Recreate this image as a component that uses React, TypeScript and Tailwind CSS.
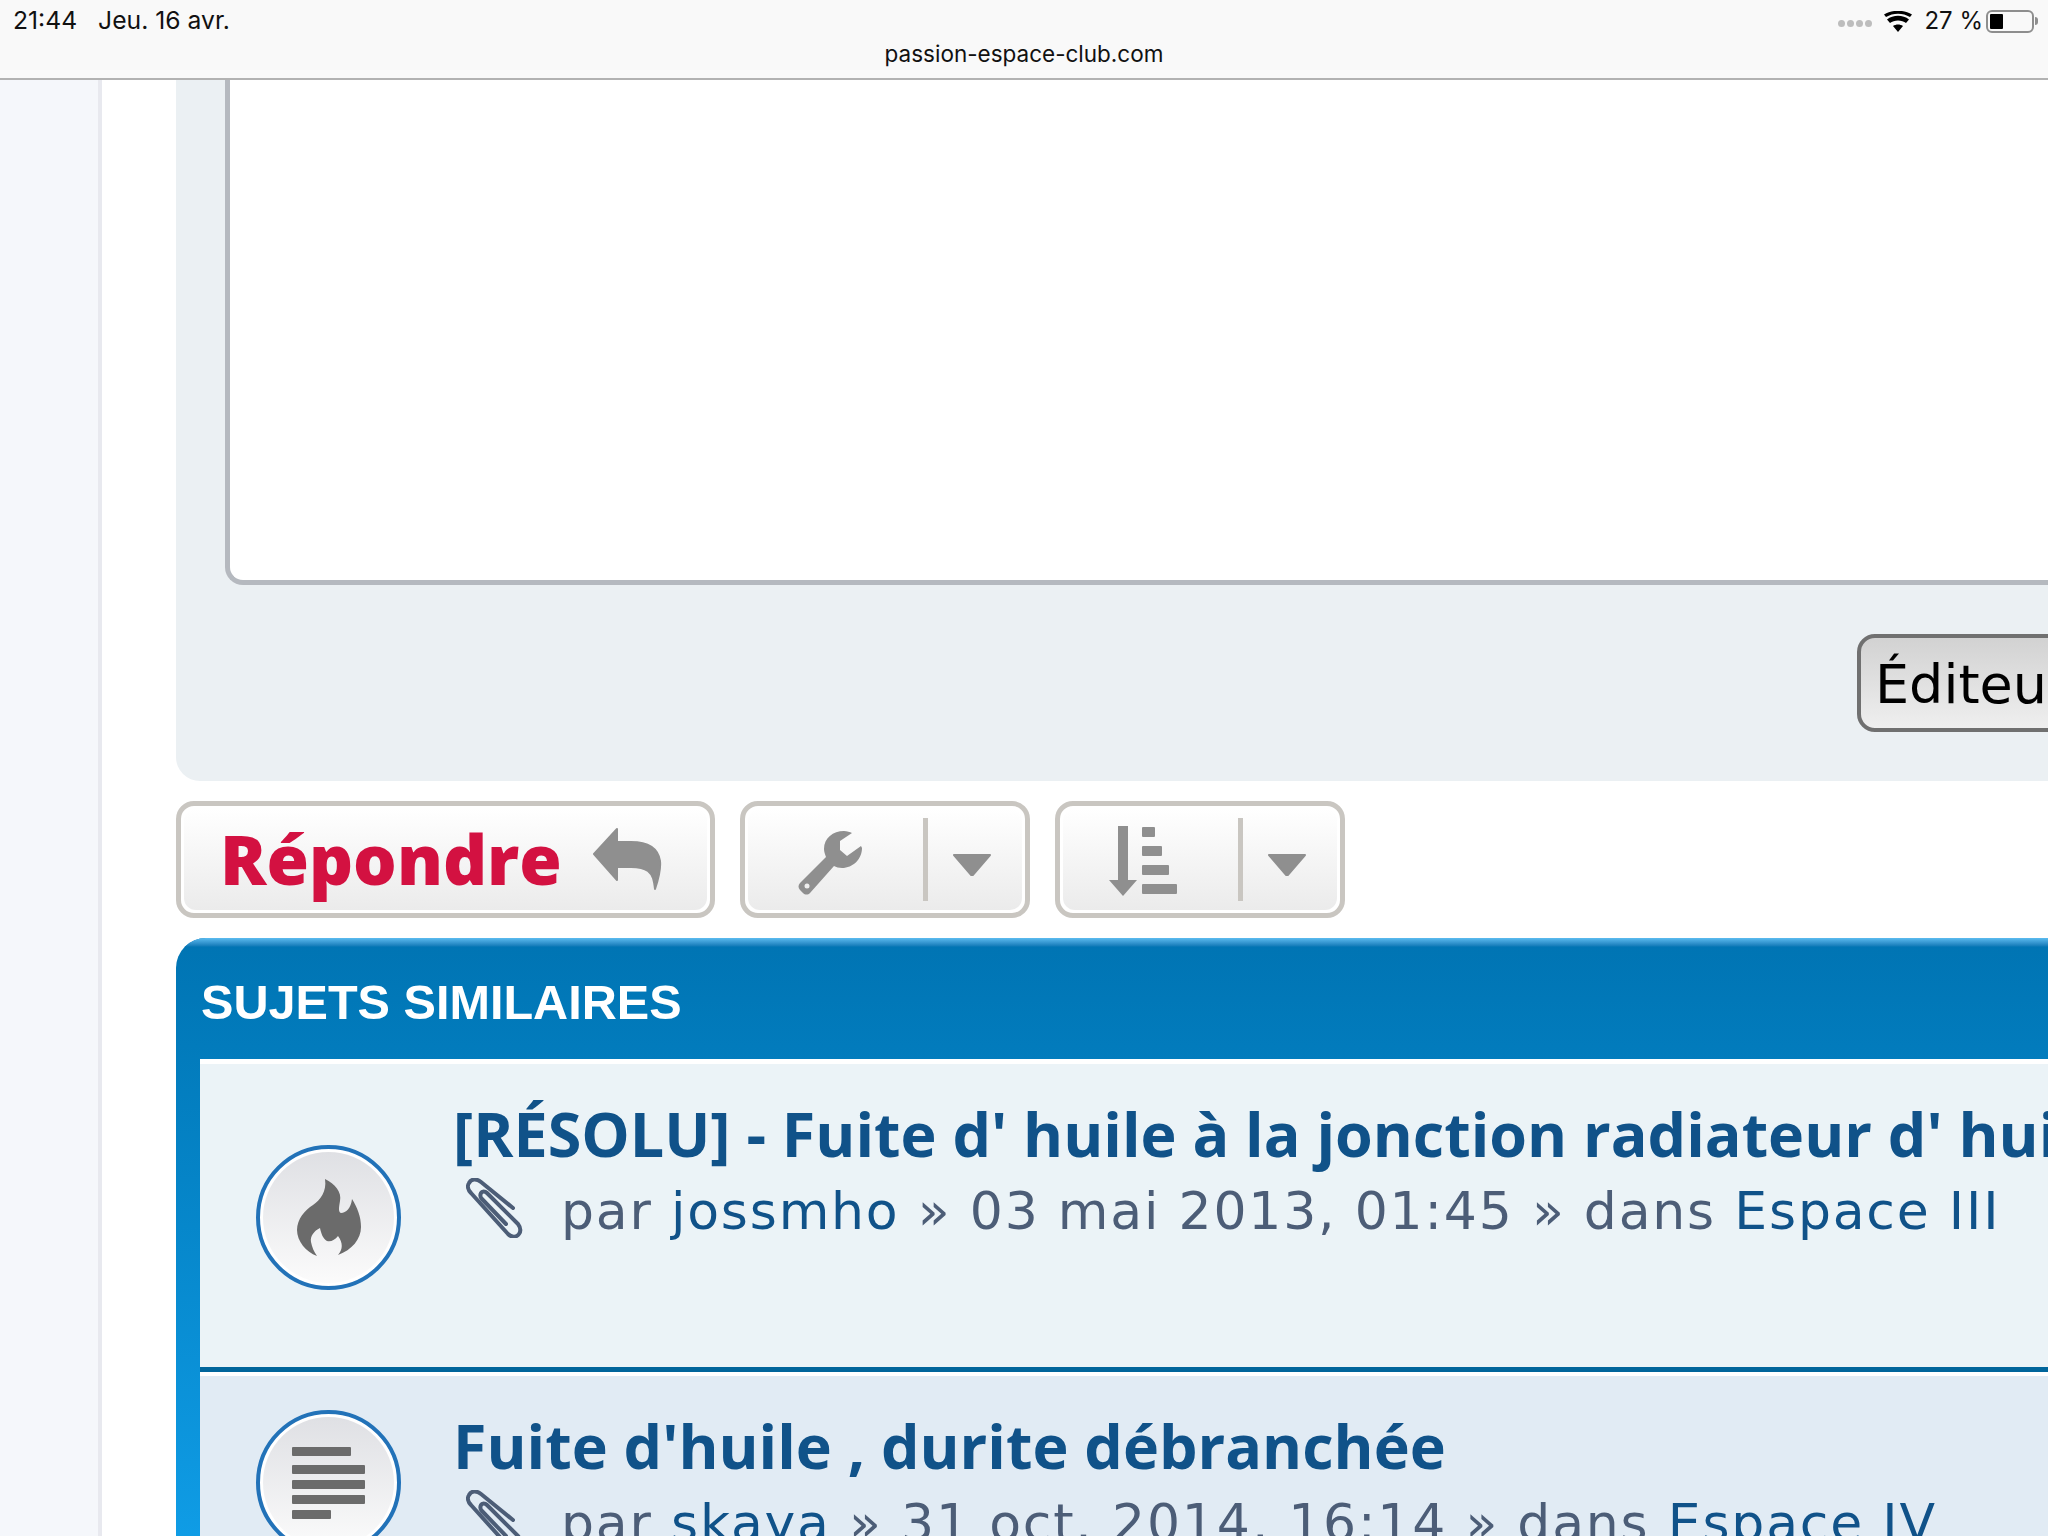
import React from 'react';

const ArrowDown = () => (
  <svg width="40" height="24" viewBox="0 0 40 24"><path d="M2 3h36l-18 21z" fill="#8f8f8f" stroke="#8f8f8f" strokeWidth="2" strokeLinejoin="round" /></svg>
);

const ReplyIcon = () => (
  <svg width="70" height="64" viewBox="0 0 70 64">
    <path d="M25 2v13h14c18 0 27 6 29 19 1 9-2 19-5 28-1-9-2-14-7-18-4-3-9-4-17-4H25v13L2 27z" fill="#8f8f8f" stroke="#8f8f8f" strokeWidth="2" strokeLinejoin="round" />
  </svg>
);

const WrenchIcon = () => (
  <svg width="66" height="66" viewBox="0 0 66 66">
    <path d="M64 18c0 11-9 20-20 20-3 0-6-1-8-2L12 63c-2 2-5 2-7 0l-3-3c-2-2-2-5 0-7l26-26c-1-3-2-5-2-8C26 8 35 1 46 1c3 0 6 1 8 2L42 11v9l7 6 14-10z" fill="#8f8f8f" />
    <circle cx="9" cy="56" r="2.5" fill="#efefef" />
  </svg>
);

const SortIcon = () => (
  <svg width="68" height="70" viewBox="0 0 68 70">
    <rect x="9" y="0" width="10" height="56" fill="#8f8f8f" />
    <path d="M0 54h28L14 70z" fill="#8f8f8f" />
    <rect x="33" y="1" width="13" height="10" rx="1" fill="#8f8f8f" />
    <rect x="33" y="20" width="20" height="10" rx="1" fill="#8f8f8f" />
    <rect x="33" y="39" width="27" height="10" rx="1" fill="#8f8f8f" />
    <rect x="33" y="58" width="35" height="10" rx="1" fill="#8f8f8f" />
  </svg>
);

const FlameIcon = () => (
  <svg width="64" height="77" viewBox="0 0 64 77">
    <path d="M28 0C38 5 45 13 43 22C42 28 41 33 44 34C49 34 54 29 55 20C60 28 64 37 64 48C64 60 55 71 41 76C46 70 46 64 41 57C38 61 34 63 30 62C26 60 24 54 23 49C17 52 13 57 14 63C15 68 17 73 20 77C9 73 0 62 0 51C0 40 8 31 16 26C23 21 30 13 28 0Z" fill="#6b6b6b" />
  </svg>
);

const LinesIcon = () => (
  <svg width="73" height="72" viewBox="0 0 73 72">
    <rect x="0" y="0" width="59" height="9" rx="1" fill="#6b6b6b" />
    <rect x="0" y="18" width="73" height="9" rx="1" fill="#6b6b6b" />
    <rect x="0" y="33" width="73" height="9" rx="1" fill="#6b6b6b" />
    <rect x="0" y="48" width="73" height="9" rx="1" fill="#6b6b6b" />
    <rect x="0" y="63" width="39" height="9" rx="1" fill="#6b6b6b" />
  </svg>
);

const ClipIcon = () => (
  <svg width="58" height="60" viewBox="0 0 58 60" fill="none" stroke="#4c5d77" strokeWidth="4" strokeLinecap="round" strokeLinejoin="round">
    <path d="M47 30 15 4C10 0 5 1 3 5c-2 3-1 7 2 10l37 41c4 4 9 3 11 0 2-3 2-6-1-10L21 15c-2-2-5-2-6 0-1 2-1 4 1 6l24 25" />
  </svg>
);

const ToolButton = ({ icon, iconClass }: { icon: React.ReactNode; iconClass: string }) => (
  <div className="w-[290px] h-[117px] rounded-[18px] border-[5px] border-[#c9c6c1] bg-white p-[3px]">
    <div className="h-full rounded-[12px] bg-gradient-to-b from-white to-[#ebebeb] flex items-center">
      <div className={`w-[175px] flex justify-center ${iconClass}`}>{icon}</div>
      <div className="w-[5px] h-[83px] bg-[#c9c6c1]" />
      <div className="flex-1 flex justify-center pt-[8px] pr-[6px]"><ArrowDown /></div>
    </div>
  </div>
);

const Topic = ({ bg, h, icon, title, author, date, forum, iconMargin }: {
  bg: string; h: string; icon: React.ReactNode; title: string; author: string; date: string; forum: string; iconMargin: string;
}) => (
  <div className={`flex items-start pl-[56px] ${bg} ${h}`}>
    <div className={`w-[145px] h-[145px] shrink-0 rounded-full border-[4px] border-[#2272b8] bg-white p-[3px] ${iconMargin}`}>
      <div className="w-full h-full rounded-full bg-gradient-to-b from-[#dfe0e4] to-[#fbfbfb] flex items-center justify-center">{icon}</div>
    </div>
    <div className="ml-[52px] whitespace-nowrap">
      <div className="text-[61px] leading-[78px] font-bold text-[#105289] mt-[31px]" style={{ fontFamily: '"Open Sans", sans-serif' }}>{title}</div>
      <div className="flex items-center text-[#4c5d77] text-[52px] leading-[72px] tracking-[1.8px] -mt-[1px]" style={{ fontFamily: '"DejaVu Sans", sans-serif' }}>
        <div className="ml-[13px] mr-[37px] -mt-[3px]"><ClipIcon /></div>
        <span className="mt-[3px]">par <span className="text-[#105289]">{author}</span> » {date} » dans <span className="text-[#105289]">{forum}</span></span>
      </div>
    </div>
  </div>
);

export default function App() {
  return (
    <div className="w-[2048px] h-[1536px] overflow-hidden bg-white flex flex-col" style={{ fontFamily: '"Liberation Sans", sans-serif' }}>
      <div className="h-[80px] shrink-0 bg-[#f9f9f9] border-b-[2px] border-[#b2b2b2] relative text-[24.7px] text-[#111]" style={{ fontFamily: 'Inter, sans-serif' }}>
        <div className="flex items-center h-[42px] pl-[13px]">
          <span>21:44</span>
          <span className="ml-[21px]">Jeu. 16 avr.</span>
          <div className="ml-auto flex items-center pr-[10px]">
            <div className="flex gap-[2px] mr-[12px] mt-[4px]">
              <i className="w-[7px] h-[7px] rounded-full bg-[#bdbdbd]" />
              <i className="w-[7px] h-[7px] rounded-full bg-[#bdbdbd]" />
              <i className="w-[7px] h-[7px] rounded-full bg-[#bdbdbd]" />
              <i className="w-[7px] h-[7px] rounded-full bg-[#bdbdbd]" />
            </div>
            <svg width="28" height="21" viewBox="0 0 28 21" className="mr-[12px]">
              <path d="M14 21 9 15c3-2 7-2 10 0zM6 12 3 8.500c6-5 16-5 22 0L22 12c-4-3.500-12-3.500-16 0zM2 6 0 3.500C8-1.500 20-1.500 28 3.500L26 6C19 1.500 9 1.500 2 6z" fill="#000" />
            </svg>
            <span className="text-[24px]">27 %</span>
            <div className="ml-[3px] w-[48px] h-[23px] rounded-[6px] border-[2px] border-[#8e8e8e] p-[2px]">
              <div className="w-[13px] h-full bg-black rounded-[1px]" />
            </div>
            <div className="w-[3px] h-[8px] bg-[#8e8e8e] ml-[1px] rounded-r-full" />
          </div>
        </div>
        <div className="text-center leading-[24px] text-[22.5px]">passion-espace-club.com</div>
      </div>

      <div className="flex flex-1 min-h-0">
        <div className="w-[102px] shrink-0 bg-[#f5f7fb] border-r-[4px] border-[#e8e9ef]" />
        <div className="flex-1 min-w-0 pl-[74px]">
          <div className="h-[701px] w-[1872px] bg-[#ebf0f3] rounded-bl-[24px] pl-[49px]">
            <div className="h-[505px] bg-white border-l-[5px] border-b-[5px] border-[#b5b9bf] rounded-bl-[18px]" />
            <div className="mt-[49px] ml-[1632px] w-[300px] h-[98px] rounded-[18px] border-[4px] border-[#707070] bg-gradient-to-b from-[#d2d2d2] to-[#efefef] text-[54px] text-black pl-[14px] leading-[94px]" style={{ fontFamily: '"DejaVu Sans", sans-serif' }}>
              Éditeur
            </div>
          </div>

          <div className="flex mt-[20px] gap-[25px]">
            <div className="w-[539px] h-[117px] rounded-[18px] border-[5px] border-[#c9c6c1] bg-white p-[3px]">
              <div className="h-full rounded-[12px] bg-gradient-to-b from-white to-[#ebebeb] flex items-center pl-[36px]">
                <span className="text-[68.7px] font-extrabold text-[#d31141] -mt-[2px]" style={{ fontFamily: '"Open Sans", sans-serif' }}>Répondre</span>
                <div className="ml-[30px] -mt-[2px]"><ReplyIcon /></div>
              </div>
            </div>
            <ToolButton icon={<WrenchIcon />} iconClass="pr-[10px] pt-[6px]" />
            <ToolButton icon={<SortIcon />} iconClass="pr-[15px] pt-[2px]" />
          </div>

          <div className="mt-[20px] rounded-tl-[30px] overflow-hidden bg-gradient-to-b from-[#0074b3] to-[#12a3ee] h-[700px]">
            <div className="h-[9px] bg-gradient-to-b from-[#5bbcf0] to-[#0074b3]" />
            <div className="pl-[24px]">
              <div className="h-[112px] pt-[27px] pl-[1px] text-[48.6px] leading-[56px] font-bold text-white">SUJETS SIMILAIRES</div>
              <div className="border-t-[5px] border-white">
                <Topic bg="bg-[#ebf3f7]" h="h-[303px]" icon={<FlameIcon />} iconMargin="mt-[81px]" title="[RÉSOLU] - Fuite d' huile à la jonction radiateur d' huile" author="jossmho" date="03 mai 2013, 01:45" forum="Espace III" />
                <div className="h-[5px] bg-[#00659b]" />
                <div className="h-[4px] bg-white" />
                <Topic bg="bg-[#e1ebf4]" h="h-[300px]" icon={<LinesIcon />} iconMargin="mt-[34px]" title="Fuite d'huile , durite débranchée" author="skaya" date="31 oct. 2014, 16:14" forum="Espace IV" />
              </div>
            </div>
          </div>
        </div>
      </div>
    </div>
  );
}
